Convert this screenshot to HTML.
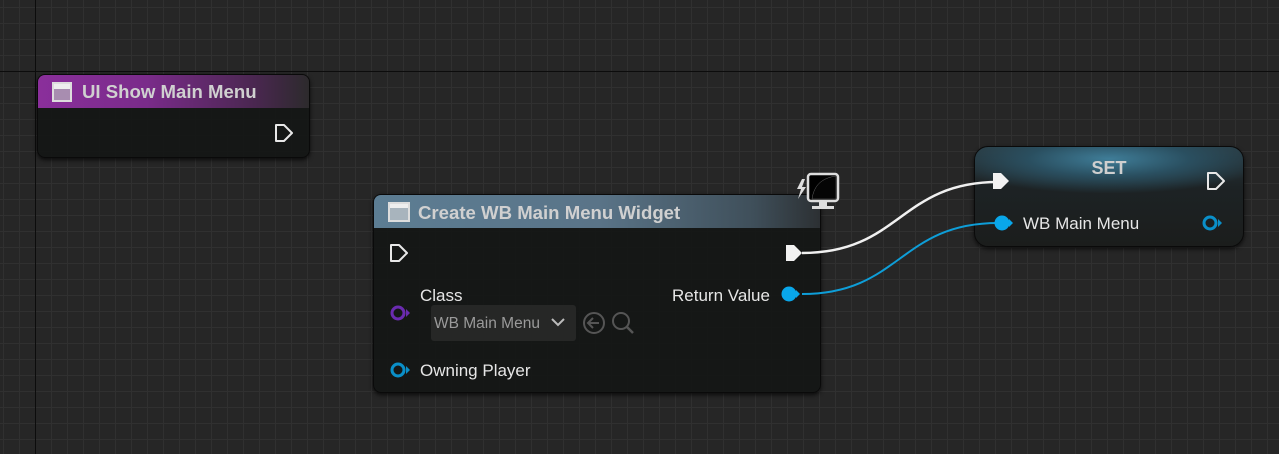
<!DOCTYPE html>
<html><head><style>
body{margin:0;width:1279px;height:454px;overflow:hidden;background:#262626;font-family:"Liberation Sans",sans-serif;position:relative}
.grid{position:absolute;inset:0;background-image:linear-gradient(#303030 1px,transparent 1px),linear-gradient(90deg,#303030 1px,transparent 1px);background-size:16px 16px;background-position:0 7px,3px 0}
.ax{position:absolute;background:#0c0c0c}
.node{position:absolute;background:rgba(20,22,21,0.94);border-radius:8px;box-shadow:0 2px 4px rgba(0,0,0,.7);border:1px solid #0a0a0a}
.hdr{position:absolute;left:0;right:0;top:0;border-radius:7px 7px 0 0;color:#d0d0d0;font-weight:bold;font-size:18.6px}
.t{position:absolute;color:#e6e6e6;font-size:17px}
svg{position:absolute;left:0;top:0}
</style></head><body>
<div class="grid"></div>
<div class="ax" style="left:35px;top:0;width:1px;height:454px"></div>
<div class="ax" style="left:0;top:71px;width:1279px;height:1px"></div>

<div class="node" style="left:37px;top:74px;width:271px;height:82px">
 <div class="hdr" style="height:33px;background:linear-gradient(90deg,#8a2f9b 0%,#7a2b8a 40%,#4a2750 80%,#2c2a2c 100%)">
  <div style="position:absolute;left:14px;top:7px;width:20px;height:20px;border:2px solid #ddd;box-sizing:border-box;background:linear-gradient(#eee 0 5px,#a88db0 5px)"></div>
  <span style="position:absolute;left:44px;top:6px">UI Show Main Menu</span></div>
</div>

<div class="node" style="left:373px;top:194px;width:446px;height:197px">
 <div class="hdr" style="height:33px;background:linear-gradient(90deg,#5c7d93 0%,#5a7488 50%,#3f4f5a 85%,#2c3033 100%)">
  <div style="position:absolute;left:14px;top:7px;width:22px;height:20px;border:2px solid #ddd;box-sizing:border-box;background:linear-gradient(#eee 0 4px,#a8b4bd 4px)"></div>
  <span style="position:absolute;left:44px;top:7px">Create WB Main Menu Widget</span></div>
 <div class="t" style="left:46px;top:91px">Class</div>
 <div class="t" style="left:298px;top:91px">Return Value</div>
 <div style="position:absolute;left:57px;top:110px;width:145px;height:36px;background:#262726;border-radius:3px"></div>
 <div style="position:absolute;left:60px;top:120px;color:#9a9a9a;font-size:15.5px">WB Main Menu</div>
 <div class="t" style="left:46px;top:166px">Owning Player</div>
</div>

<div class="node" style="left:974px;top:146px;width:268px;height:99px;border-radius:14px;background:radial-gradient(ellipse 60% 35% at 50% 12%,#3f7d98 0%,#2a4f60 50%,rgba(30,36,38,0) 100%),linear-gradient(180deg,#2b3a40 0%,#1d2325 40%,#1b1d1c 100%)">
 <div style="position:absolute;left:0;right:0;top:11px;text-align:center;color:#cfcfcf;font-weight:bold;font-size:18px">SET</div>
 <div class="t" style="left:48px;top:67px">WB Main Menu</div>
</div>

<svg width="1279" height="454">
 <path d="M802 253 C 900 253, 900 182, 998 182" stroke="#f0f0f0" stroke-width="2.5" fill="none"/>
 <path d="M802 294 C 900 294, 900 223, 998 223" stroke="#0e9ed8" stroke-width="2" fill="none"/>
 <g fill="none" stroke="#e8e8e8" stroke-width="2" stroke-linejoin="round">
  <path d="M276 125 h8 l8 8 l-8 8 h-8 z"/>
  <path d="M391 245 h8 l8 8 l-8 8 h-8 z"/>
  <path d="M1208 173 h8 l8 8 l-8 8 h-8 z"/>
 </g>
 <g fill="#f2f2f2">
  <path d="M786 245 h8 l8 8 l-8 8 h-8 z"/>
  <path d="M993 173 h8 l8 8 l-8 8 h-8 z"/>
 </g>
 <circle cx="789" cy="294" r="7.5" fill="#09a7ea"/><path d="M796 290 l4 4 l-4 4z" fill="#09a7ea"/>
 <circle cx="1002" cy="223" r="7.5" fill="#09a7ea"/><path d="M1009 219 l4 4 l-4 4z" fill="#09a7ea"/>
 <circle cx="1210" cy="223" r="6" fill="none" stroke="#0a8fc8" stroke-width="3"/><path d="M1218 219 l4 4 l-4 4z" fill="#0a8fc8"/>
 <circle cx="398" cy="370" r="6" fill="none" stroke="#0a8fc8" stroke-width="3"/><path d="M406 366 l4 4 l-4 4z" fill="#0a8fc8"/>
 <circle cx="398" cy="313" r="6" fill="none" stroke="#6a2bb0" stroke-width="3"/><path d="M406 309 l4 4 l-4 4z" fill="#6a2bb0"/>
 <path d="M552 319 l6 6 l6 -6" fill="none" stroke="#bbb" stroke-width="2"/>
 <circle cx="594" cy="323" r="10" fill="none" stroke="#555" stroke-width="2"/>
 <path d="M599 323 h-10 M593 318 l-5 5 l5 5" fill="none" stroke="#555" stroke-width="2"/>
 <circle cx="621" cy="321" r="8" fill="none" stroke="#555" stroke-width="2"/>
 <path d="M627 327 l6 6" stroke="#555" stroke-width="2.5"/>
 <rect x="808" y="174" width="30" height="27" rx="3" fill="#000" stroke="#ddd" stroke-width="2.5"/>
 <path d="M812 199 C 814 185, 822 178, 836 176 L 836 199 Z" fill="#050505" stroke="#666" stroke-width="0.5"/>
 <rect x="819" y="202" width="8" height="4" fill="#ddd"/><rect x="812" y="206" width="22" height="3" fill="#ddd"/>
 <path d="M802 179 l-5 10 h4 l-3 10 l8 -12 h-4 l3 -8z" fill="#ddd"/>
</svg>
</body></html>
